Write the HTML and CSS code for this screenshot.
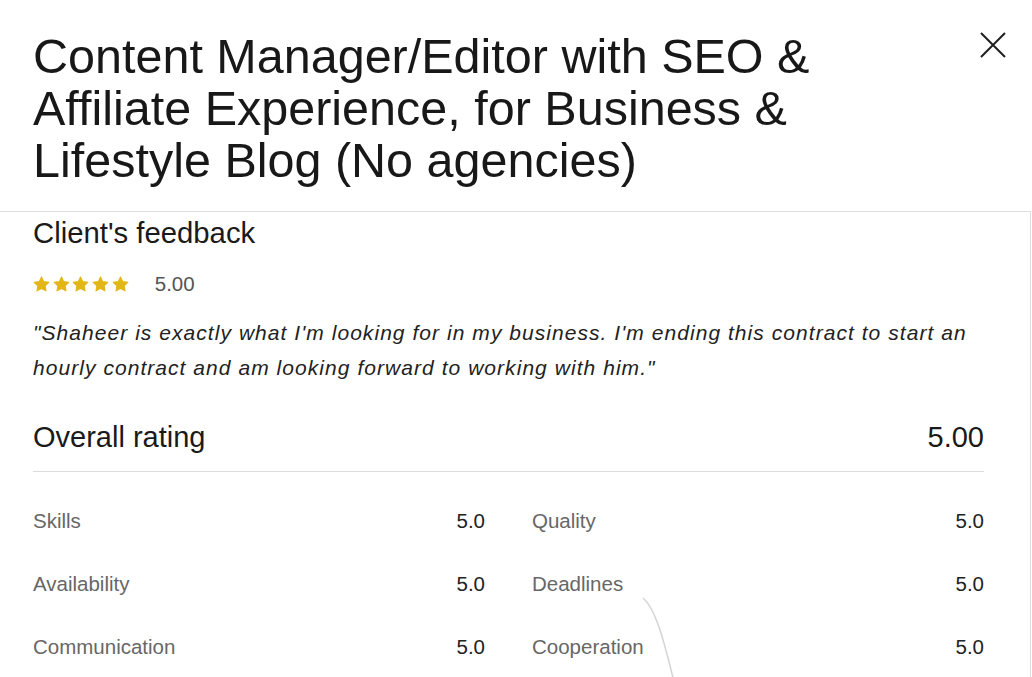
FILE: index.html
```html
<!DOCTYPE html>
<html lang="en">
<head>
<meta charset="utf-8">
<title>Feedback</title>
<link rel="stylesheet" href="styles.css">
</head>
<body>
<div class="modal">
  <header class="head">
    <h1 class="title">Content Manager/Editor with SEO &amp; Affiliate Experience, for Business &amp; Lifestyle Blog (No agencies)</h1>
    <button class="close" aria-label="Close">
      <svg width="26" height="26" viewBox="0 0 26 26"><path d="M1 1 L25 25 M25 1 L1 25" stroke="#1f1f1f" stroke-width="2" fill="none"/></svg>
    </button>
  </header>
  <section class="body">
    <h2 class="sub">Client's feedback</h2>
    <div class="stars-row">
      <div class="stars">
        <svg width="17" height="16" viewBox="0 0 24 23"><path d="M12 1.5l3.2 6.6 7.3 1-5.3 5.1 1.3 7.2L12 18l-6.5 3.4 1.3-7.2L1.5 9.1l7.3-1z" fill="#e3b618" stroke="#e3b618" stroke-width="1.5" stroke-linejoin="round"/></svg>
        <svg width="17" height="16" viewBox="0 0 24 23"><path d="M12 1.5l3.2 6.6 7.3 1-5.3 5.1 1.3 7.2L12 18l-6.5 3.4 1.3-7.2L1.5 9.1l7.3-1z" fill="#e3b618" stroke="#e3b618" stroke-width="1.5" stroke-linejoin="round"/></svg>
        <svg width="17" height="16" viewBox="0 0 24 23"><path d="M12 1.5l3.2 6.6 7.3 1-5.3 5.1 1.3 7.2L12 18l-6.5 3.4 1.3-7.2L1.5 9.1l7.3-1z" fill="#e3b618" stroke="#e3b618" stroke-width="1.5" stroke-linejoin="round"/></svg>
        <svg width="17" height="16" viewBox="0 0 24 23"><path d="M12 1.5l3.2 6.6 7.3 1-5.3 5.1 1.3 7.2L12 18l-6.5 3.4 1.3-7.2L1.5 9.1l7.3-1z" fill="#e3b618" stroke="#e3b618" stroke-width="1.5" stroke-linejoin="round"/></svg>
        <svg width="17" height="16" viewBox="0 0 24 23"><path d="M12 1.5l3.2 6.6 7.3 1-5.3 5.1 1.3 7.2L12 18l-6.5 3.4 1.3-7.2L1.5 9.1l7.3-1z" fill="#e3b618" stroke="#e3b618" stroke-width="1.5" stroke-linejoin="round"/></svg>
      </div>
      <span class="score">5.00</span>
    </div>
    <p class="quote">"Shaheer is exactly what I'm looking for in my business. I'm ending this contract to start an hourly contract and am looking forward to working with him."</p>
    <div class="overall">
      <span>Overall rating</span>
      <span>5.00</span>
    </div>
    <div class="grid">
      <div class="row"><span class="lbl">Skills</span><span class="val">5.0</span></div>
      <div class="row"><span class="lbl">Quality</span><span class="val">5.0</span></div>
      <div class="row"><span class="lbl">Availability</span><span class="val">5.0</span></div>
      <div class="row"><span class="lbl">Deadlines</span><span class="val">5.0</span></div>
      <div class="row"><span class="lbl">Communication</span><span class="val">5.0</span></div>
      <div class="row"><span class="lbl">Cooperation</span><span class="val">5.0</span></div>
    </div>
  </section>
  <svg class="trail" width="40" height="90" viewBox="0 0 40 90"><path d="M2 2 C14 12 22 40 34 90" stroke="#d4d4d4" stroke-width="1.5" fill="none"/></svg>
</div>
</body>
</html>
```

FILE: styles.css
```css
* { box-sizing: border-box; }
html, body { margin: 0; padding: 0; background: #fff; }
body {
  font-family: "Liberation Sans", Arial, sans-serif;
  color: #1a1a1a;
  width: 1032px;
  height: 677px;
  overflow: hidden;
}
.modal { position: relative; width: 1032px; height: 677px; }
.head {
  display: flex;
  justify-content: space-between;
  align-items: flex-start;
  padding: 30px 25px 0 33px;
  height: 212px;
  border-bottom: 1px solid #dedede;
  width: 1031px;
}
.title {
  margin: 0;
  font-weight: 400;
  font-size: 48.5px;
  line-height: 52px;
  color: #181818;
  width: 880px;
}
.close {
  border: 0;
  background: none;
  padding: 0;
  margin-top: 2px;
  width: 26px;
  height: 26px;
  cursor: pointer;
}
.close svg { display: block; }
.body {
  width: 1031px;
  border-right: 1px solid #dedede;
  padding: 3px 46px 0 33px;
  height: 465px;
}
.sub {
  margin: 0;
  font-weight: 400;
  font-size: 29.3px;
  line-height: 36px;
  color: #1a1a1a;
}
.stars-row {
  display: flex;
  align-items: center;
  gap: 26px;
  height: 24px;
  margin-top: 21px;
}
.stars { display: flex; gap: 2.7px; }
.stars svg { display: block; }
.score { font-size: 20.5px; color: #555; }
.quote {
  margin: 19px 0 0;
  font-style: italic;
  font-size: 21px;
  letter-spacing: 1.05px;
  line-height: 35px;
  color: #222;
}
.overall {
  display: flex;
  justify-content: space-between;
  font-size: 29px;
  line-height: 36px;
  margin-top: 34px;
  padding-bottom: 16px;
  border-bottom: 1px solid #dcdcdc;
  color: #1a1a1a;
}
.grid {
  display: grid;
  grid-template-columns: 1fr 1fr;
  column-gap: 47px;
  row-gap: 39px;
  padding-top: 37px;
}
.row {
  display: flex;
  justify-content: space-between;
  font-size: 20.5px;
  line-height: 24px;
}
.lbl { color: #676767; }
.val { color: #222; }
.trail { position: absolute; left: 641px; top: 596px; }
```
